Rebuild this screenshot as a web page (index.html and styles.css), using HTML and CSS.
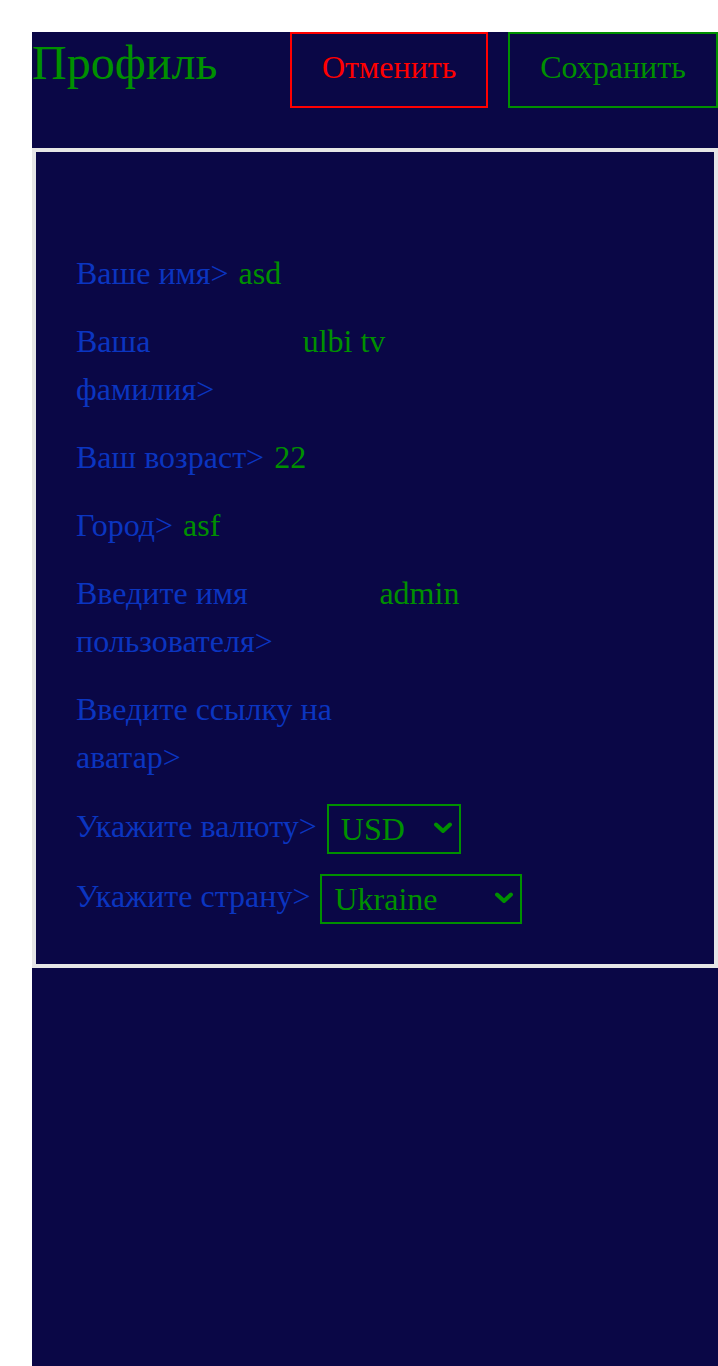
FILE: index.html
```html
<!DOCTYPE html>
<html lang="ru">
<head>
<meta charset="utf-8">
<title>Профиль</title>
<link rel="stylesheet" href="styles.css">
</head>
<body>
<div class="app">
  <div class="page">
    <header class="header">
      <h1 class="title">Профиль</h1>
      <div class="actions">
        <button class="btn btn-cancel">Отменить</button>
        <button class="btn btn-save">Сохранить</button>
      </div>
    </header>
    <section class="card">
      <div class="avatar"></div>
      <div class="row"><span class="label">Ваше имя&gt;</span><input class="value" value="asd"></div>
      <div class="row"><span class="label">Ваша фамилия&gt;</span><input class="value" value="ulbi tv"></div>
      <div class="row"><span class="label">Ваш возраст&gt;</span><input class="value" value="22"></div>
      <div class="row"><span class="label">Город&gt;</span><input class="value" value="asf"></div>
      <div class="row"><span class="label">Введите имя пользователя&gt;</span><input class="value" value="admin"></div>
      <div class="row"><span class="label">Введите ссылку на аватар&gt;</span><input class="value" value=""></div>
      <div class="row row-select row-currency"><span class="label">Укажите валюту&gt;</span>
        <span class="select-wrap select-currency">
          <select class="select"><option>USD</option><option>EUR</option><option>RUB</option></select>
          <svg class="chevron" width="18" height="12" viewBox="0 0 18 12"><path d="M2 2.5 L9 9 L16 2.5" fill="none" stroke="#009000" stroke-width="4" stroke-linecap="round" stroke-linejoin="round"/></svg>
        </span>
      </div>
      <div class="row row-select"><span class="label">Укажите страну&gt;</span>
        <span class="select-wrap select-country">
          <select class="select"><option>Ukraine</option><option>Russia</option><option>Belarus</option></select>
          <svg class="chevron" width="18" height="12" viewBox="0 0 18 12"><path d="M2 2.5 L9 9 L16 2.5" fill="none" stroke="#009000" stroke-width="4" stroke-linecap="round" stroke-linejoin="round"/></svg>
        </span>
      </div>
    </section>
  </div>
</div>
</body>
</html>
```
FILE: styles.css
```css
html, body {
  margin: 0;
  padding: 0;
  background: #ffffff;
}
body {
  font-family: "Liberation Serif", "Times New Roman", serif;
  overflow: hidden;
}
.app {
  padding: 32px 0 0 32px;
}
.page {
  width: 686px;
  min-height: 1334px;
  background: #0a0746;
}
.header {
  display: flex;
  align-items: flex-start;
  height: 116px;
}
.title {
  margin: 0;
  font-size: 48px;
  font-weight: normal;
  line-height: 62px;
  color: #009000;
}
.actions {
  margin-left: auto;
  display: flex;
  gap: 20px;
}
.btn {
  font-family: inherit;
  font-size: 32px;
  line-height: 36px;
  padding: 15px 30px 21px;
  background: transparent;
  border: 2px solid;
  cursor: pointer;
}
.btn-cancel {
  color: #ff0000;
  border-color: #ff0000;
  width: 198px;
}
.btn-save {
  color: #009000;
  border-color: #009000;
  width: 210px;
}
.card {
  border: 4px solid #e6e6e6;
  padding: 40px;
  display: flex;
  flex-direction: column;
  gap: 20px;
}
.avatar {
  height: 37px;
}
.row {
  display: flex;
  align-items: flex-start;
  gap: 10px;
  font-size: 32px;
  line-height: 48px;
}
.row-select {
  align-items: center;
}
.row-select .label {
  line-height: 42px;
  margin-bottom: 6px;
}
.row-currency {
  margin-top: 3px;
}
.label {
  color: #0b35c0;
}
.value {
  width: 378px;
  min-width: 0;
  font-family: inherit;
  font-size: 32px;
  line-height: 48px;
  height: 48px;
  padding: 0;
  border: none;
  outline: none;
  background: transparent;
  color: #009000;
}
.select-wrap {
  position: relative;
  display: block;
  flex: none;
  height: 50px;
}
.select {
  -webkit-appearance: none;
  appearance: none;
  display: block;
  width: 100%;
  box-sizing: border-box;
  font-family: inherit;
  font-size: 32px;
  line-height: 46px;
  height: 50px;
  padding: 0 30px 0 12px;
  border: 2px solid #009000;
  border-radius: 0;
  background: transparent;
  color: #009000;
  outline: none;
}
.chevron {
  position: absolute;
  right: 9px;
  top: 18px;
  pointer-events: none;
}
.select-currency {
  width: 134px;
}
.select-country {
  width: 202px;
}
```
